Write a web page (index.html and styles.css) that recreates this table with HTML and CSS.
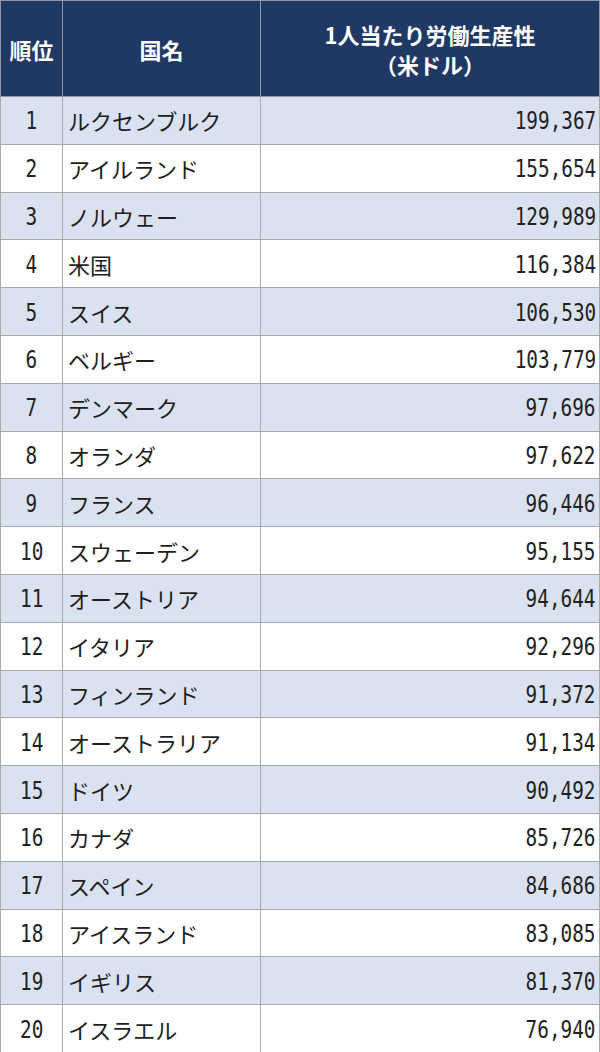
FILE: index.html
```html
<!DOCTYPE html>
<html lang="ja">
<head>
<meta charset="utf-8">
<link rel="stylesheet" href="styles.css">
</head>
<body>
<table class="rank-table">
  <colgroup><col class="c-rank"><col class="c-name"><col class="c-val"></colgroup>
  <thead>
    <tr><th>順位</th><th>国名</th><th>1人当たり労働生産性<br>（米ドル）</th></tr>
  </thead>
  <tbody>
    <tr><td class="rank"><span class="num">1</span></td><td class="name">ルクセンブルク</td><td class="val"><span class="num">199,367</span></td></tr>
    <tr><td class="rank"><span class="num">2</span></td><td class="name">アイルランド</td><td class="val"><span class="num">155,654</span></td></tr>
    <tr><td class="rank"><span class="num">3</span></td><td class="name">ノルウェー</td><td class="val"><span class="num">129,989</span></td></tr>
    <tr><td class="rank"><span class="num">4</span></td><td class="name">米国</td><td class="val"><span class="num">116,384</span></td></tr>
    <tr><td class="rank"><span class="num">5</span></td><td class="name">スイス</td><td class="val"><span class="num">106,530</span></td></tr>
    <tr><td class="rank"><span class="num">6</span></td><td class="name">ベルギー</td><td class="val"><span class="num">103,779</span></td></tr>
    <tr><td class="rank"><span class="num">7</span></td><td class="name">デンマーク</td><td class="val"><span class="num">97,696</span></td></tr>
    <tr><td class="rank"><span class="num">8</span></td><td class="name">オランダ</td><td class="val"><span class="num">97,622</span></td></tr>
    <tr><td class="rank"><span class="num">9</span></td><td class="name">フランス</td><td class="val"><span class="num">96,446</span></td></tr>
    <tr><td class="rank"><span class="num">10</span></td><td class="name">スウェーデン</td><td class="val"><span class="num">95,155</span></td></tr>
    <tr><td class="rank"><span class="num">11</span></td><td class="name">オーストリア</td><td class="val"><span class="num">94,644</span></td></tr>
    <tr><td class="rank"><span class="num">12</span></td><td class="name">イタリア</td><td class="val"><span class="num">92,296</span></td></tr>
    <tr><td class="rank"><span class="num">13</span></td><td class="name">フィンランド</td><td class="val"><span class="num">91,372</span></td></tr>
    <tr><td class="rank"><span class="num">14</span></td><td class="name">オーストラリア</td><td class="val"><span class="num">91,134</span></td></tr>
    <tr><td class="rank"><span class="num">15</span></td><td class="name">ドイツ</td><td class="val"><span class="num">90,492</span></td></tr>
    <tr><td class="rank"><span class="num">16</span></td><td class="name">カナダ</td><td class="val"><span class="num">85,726</span></td></tr>
    <tr><td class="rank"><span class="num">17</span></td><td class="name">スペイン</td><td class="val"><span class="num">84,686</span></td></tr>
    <tr><td class="rank"><span class="num">18</span></td><td class="name">アイスランド</td><td class="val"><span class="num">83,085</span></td></tr>
    <tr><td class="rank"><span class="num">19</span></td><td class="name">イギリス</td><td class="val"><span class="num">81,370</span></td></tr>
    <tr><td class="rank"><span class="num">20</span></td><td class="name">イスラエル</td><td class="val"><span class="num">76,940</span></td></tr>
  </tbody>
</table>
</body>
</html>
```
FILE: styles.css
```css
html, body {
  margin: 0;
  padding: 0;
  background: #ffffff;
}
body {
  font-family: "Noto Sans CJK JP", "Noto Sans", sans-serif;
  color: #1e1e1e;
}
.rank-table {
  border-collapse: collapse;
  table-layout: fixed;
  width: 599px;
}
.c-rank { width: 62px; }
.c-name { width: 198px; }
.c-val { width: 339px; }
.rank-table th {
  background: #203864;
  color: #ffffff;
  font-weight: 700;
  font-size: 22px;
  line-height: 30px;
  height: 95px;
  padding: 0;
  border: 1px solid #8e97ab;
  text-align: center;
  vertical-align: middle;
}
.rank-table td {
  height: 46.8px;
  padding: 0;
  border: 1px solid #a9a9a9;
  vertical-align: middle;
  font-size: 22px;
  line-height: 30px;
}
.rank-table tbody tr:nth-child(odd) td {
  background: #dae2f2;
}
.rank-table tbody tr:nth-child(even) td {
  background: #ffffff;
}
.rank { text-align: center; }
.name { padding-left: 5px !important; white-space: nowrap; }
.val { text-align: right; padding-right: 3px !important; }
.num {
  display: inline-block;
  font-family: "DejaVu Sans Mono", monospace;
  font-size: 24.5px;
  line-height: 30px;
  color: #222222;
  transform: scaleX(0.79);
}
.rank .num { transform-origin: center center; }
.val .num { transform-origin: right center; }
```
